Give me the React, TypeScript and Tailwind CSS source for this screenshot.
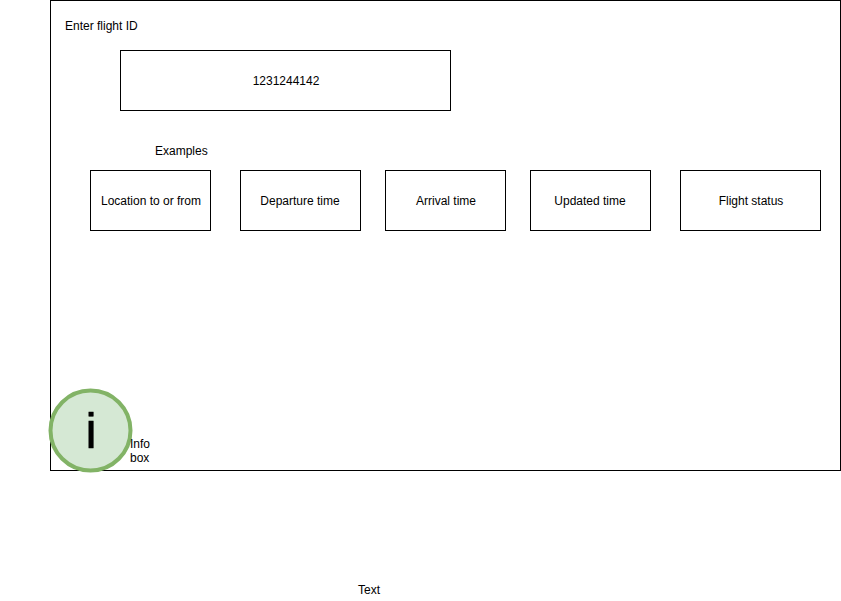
const examples = [
  { label: "Location to or from", box: "w-[121px] pl-px" },
  { label: "Departure time", box: "w-[121px] ml-[29px] pr-px" },
  { label: "Arrival time", box: "w-[121px] ml-[24px] pl-px" },
  { label: "Updated time", box: "w-[121px] ml-[24px] pr-px" },
  { label: "Flight status", box: "w-[141px] ml-[29px] pl-px" },
];

export default function App() {
  return (
    <div className="h-[601px] w-[841px] overflow-hidden bg-white pl-[50px] font-['Liberation_Sans',Arial,sans-serif] text-[12px] leading-[14px] text-black">
      <main className="flex h-[471px] w-[791px] flex-col border border-black">
        <div className="mt-[18px] ml-[14px]">Enter flight ID</div>
        <div className="mt-[17px] ml-[69px] flex h-[61px] w-[331px] shrink-0 items-center justify-center border border-black pl-px">
          1231244142
        </div>
        <div className="mt-[33px] ml-[104px]">Examples</div>
        <div className="mt-[12px] ml-[39px] flex">
          {examples.map((item) => (
            <div
              key={item.label}
              className={`flex h-[61px] shrink-0 items-center justify-center whitespace-nowrap border border-black ${item.box}`}
            >
              {item.label}
            </div>
          ))}
        </div>
        <div className="mt-[157px] -ml-[3px] flex">
          <svg className="h-[86px] w-[86px] shrink-0" viewBox="0 0 86 86">
            <circle cx="42.5" cy="42.5" r="40" fill="#d5e8d4" stroke="#82b366" strokeWidth="4" />
            <text x="43" y="60" fontSize="50" textAnchor="middle" fill="#000" stroke="#000" strokeWidth="0.5">
              i
            </text>
          </svg>
          <div className="relative mt-[49px] -ml-[4px]">
            Info
            <br />
            box
          </div>
        </div>
      </main>
      <div className="mt-[112px] ml-[308px]">Text</div>
    </div>
  );
}
